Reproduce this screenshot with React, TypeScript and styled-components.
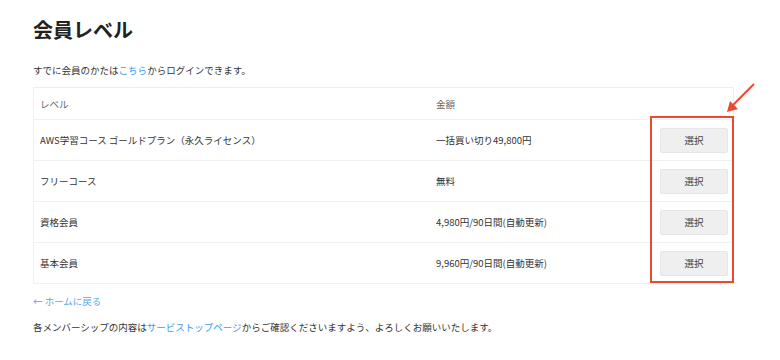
import React from "react";
import styled, { createGlobalStyle } from "styled-components";

type Plan = {
  name: string;
  price: string;
};

const plans: Plan[] = [
  { name: "AWS学習コース ゴールドプラン（永久ライセンス）", price: "一括買い切り49,800円" },
  { name: "フリーコース", price: "無料" },
  { name: "資格会員", price: "4,980円/90日間(自動更新)" },
  { name: "基本会員", price: "9,960円/90日間(自動更新)" },
];

function App() {
  return (
    <Page>
      <GlobalStyle />
      <Title>会員レベル</Title>
      <Text>
        すでに会員のかたは<Link href="#">こちら</Link>からログインできます。
      </Text>
      <TableWrap>
        <Table>
          <HeaderRow>
            <Cell>レベル</Cell>
            <Cell>金額</Cell>
            <Cell />
          </HeaderRow>
          {plans.map((plan) => (
            <Row key={plan.name}>
              <Cell>{plan.name}</Cell>
              <Cell>{plan.price}</Cell>
              <ButtonCell>
                <SelectButton>選択</SelectButton>
              </ButtonCell>
            </Row>
          ))}
        </Table>
        <Highlight />
        <Arrow width="34" height="34" viewBox="0 0 34 34">
          <line x1="31" y1="2" x2="8" y2="25" stroke="#e94b32" strokeWidth="2" />
          <polygon points="4,30 7,19 15,27" fill="#e94b32" />
        </Arrow>
      </TableWrap>
      <BackLink href="#">← ホームに戻る</BackLink>
      <Text>
        各メンバーシップの内容は<Link href="#">サービストップページ</Link>
        からご確認くださいますよう、よろしくお願いいたします。
      </Text>
    </Page>
  );
}

const GlobalStyle = createGlobalStyle`
  body {
    margin: 0;
    background: #ffffff;
    font-family: "Noto Sans CJK JP", "Noto Sans", sans-serif;
    color: #333333;
  }
`;

const Page = styled.div`
  width: 701px;
  padding: 16px 0 0 33px;
  display: flex;
  flex-direction: column;
`;

const Title = styled.h1`
  margin: 0 0 18px;
  font-size: 20px;
  line-height: 28px;
  font-weight: 700;
  color: #222222;
`;

const Text = styled.p`
  margin: 0;
  font-size: 9.5px;
  line-height: 16px;
  color: #333333;
`;

const Link = styled.a`
  color: #3d9be9;
  text-decoration: none;
`;

const BackLink = styled.a`
  margin: 9px 0 10px;
  font-size: 9.5px;
  line-height: 16px;
  color: #5aa8ee;
  text-decoration: none;
`;

const TableWrap = styled.div`
  position: relative;
  margin-top: 9px;
`;

const Table = styled.div`
  border: 1px solid #f0f0f0;
  border-top: 1px solid #eeeeee;
`;

const Row = styled.div`
  display: grid;
  grid-template-columns: 396px 221px 1fr;
  height: 40px;
  align-items: center;
  border-top: 1px solid #f0f0f0;
  font-size: 9.5px;
  color: #333333;
`;

const HeaderRow = styled(Row)`
  height: 31px;
  border-top: none;
  color: #666666;
`;

const Cell = styled.div`
  padding: 0 6px;
  white-space: nowrap;
`;

const ButtonCell = styled.div`
  display: flex;
  justify-content: flex-end;
  padding-right: 5px;
`;

const SelectButton = styled.button`
  width: 68px;
  height: 25px;
  border: 1px solid #e6e6e6;
  border-radius: 2px;
  background: #efefef;
  font-family: "Noto Sans CJK JP", sans-serif;
  font-size: 9.5px;
  color: #444444;
  cursor: pointer;
`;

const Highlight = styled.div`
  position: absolute;
  left: 617px;
  top: 29px;
  width: 80px;
  height: 163px;
  border: 2px solid #e94b32;
  pointer-events: none;
`;

const Arrow = styled.svg`
  position: absolute;
  left: 690px;
  top: -5px;
`;

export default App;
